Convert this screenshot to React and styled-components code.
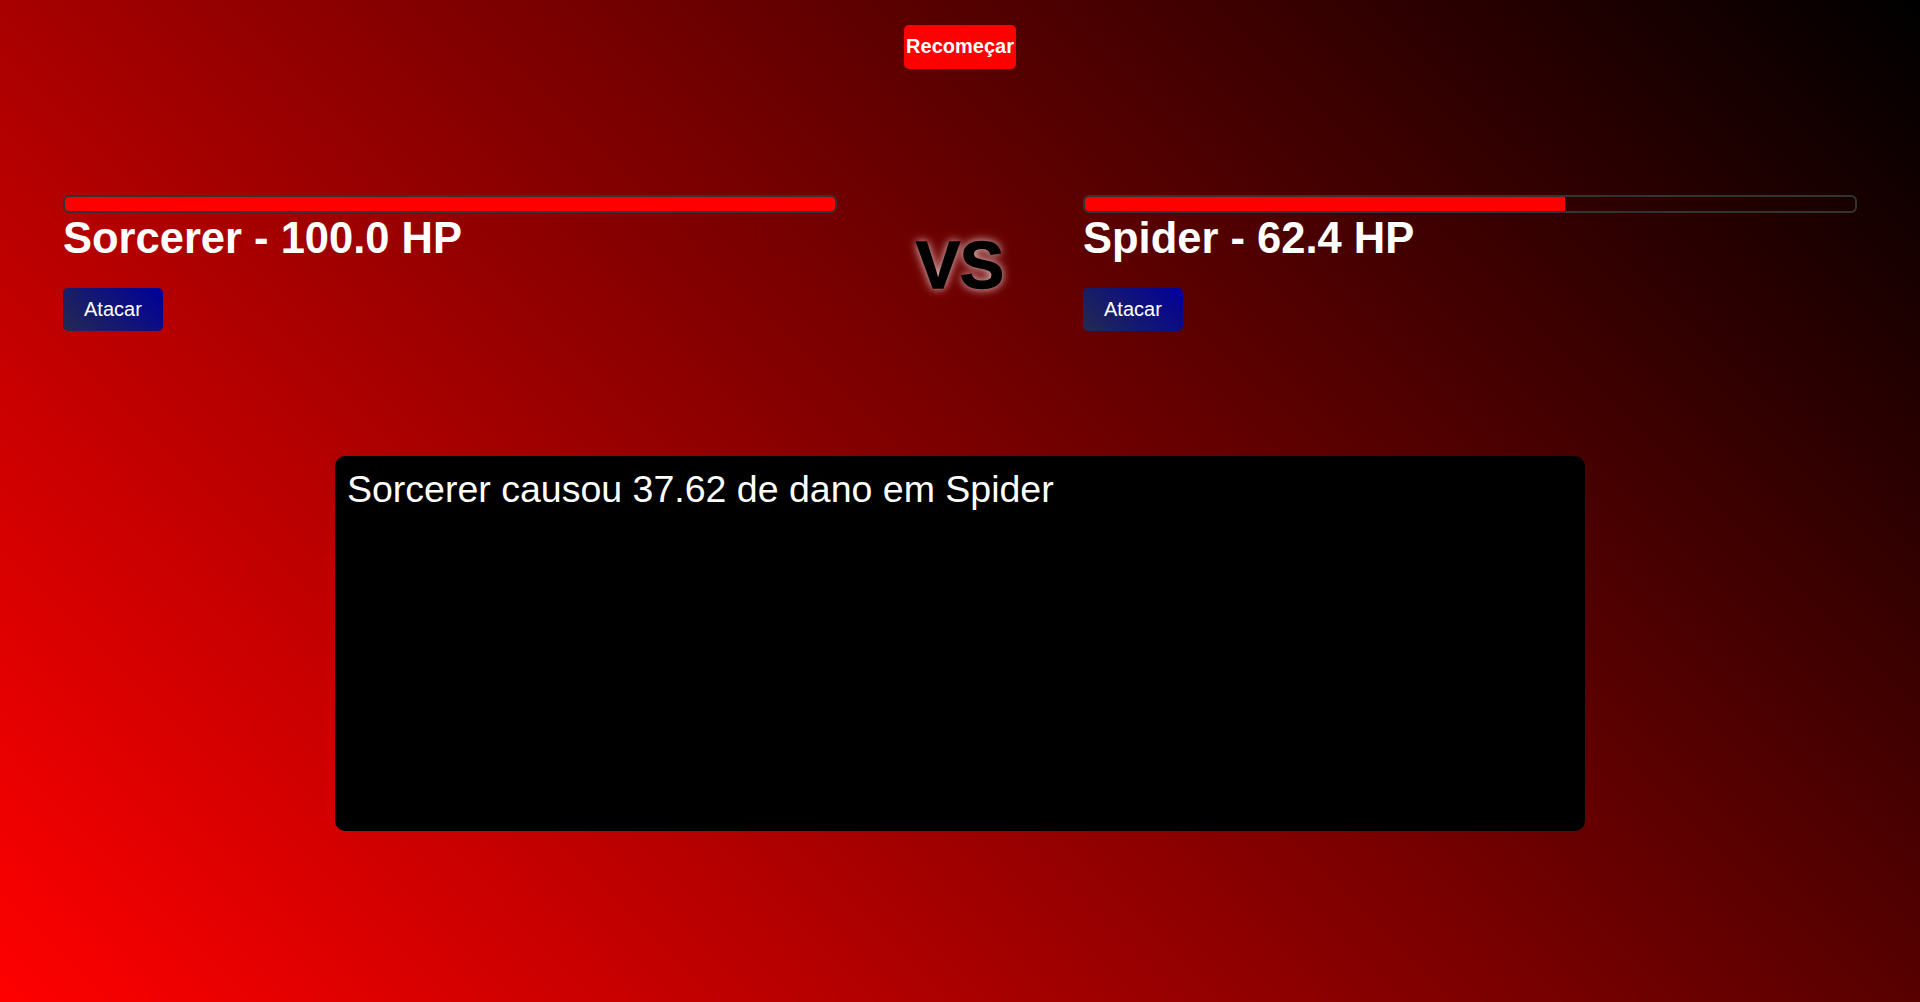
import React from 'react';
import styled, { createGlobalStyle } from 'styled-components';

const GlobalStyle = createGlobalStyle`
  html, body {
    margin: 0;
    padding: 0;
  }
  body {
    font-family: "Liberation Sans", Arial, sans-serif;
  }
  * {
    box-sizing: border-box;
  }
`;

const Page = styled.div`
  min-height: 100vh;
  background: linear-gradient(45deg, #ff0000, #000000);
  display: flex;
  flex-direction: column;
  align-items: center;
  padding-top: 25px;
`;

const RestartButton = styled.button`
  background: #ff0000;
  color: #fff;
  border: none;
  border-radius: 5px;
  font-family: inherit;
  font-size: 20px;
  font-weight: bold;
  padding: 9px 2px 11px;
  height: 44px;
  cursor: pointer;
`;

const Arena = styled.div`
  width: 100%;
  display: flex;
  justify-content: space-between;
  align-items: center;
  padding: 0 63px;
  margin-top: 126px;
`;

const Player = styled.div`
  width: 774px;
  display: flex;
  flex-direction: column;
  align-items: flex-start;
`;

const HealthBar = styled.div`
  width: 100%;
  height: 18px;
  border: 2px solid #333;
  border-radius: 6px;
  overflow: hidden;
`;

const HealthFill = styled.div`
  height: 100%;
  background: #ff0000;
  border-radius: 3px 0 0 3px;
`;

const Name = styled.h2`
  margin: 0 0 25px;
  color: #fff;
  font-size: 43.5px;
  line-height: 50px;
  font-weight: bold;
`;

const AttackButton = styled.button`
  background: linear-gradient(45deg, #232a50, #00009c);
  color: #fff;
  border: none;
  border-radius: 5px;
  font-family: inherit;
  font-size: 20px;
  padding: 10px 21px;
  height: 43px;
  cursor: pointer;
`;

const Versus = styled.div`
  font-size: 66px;
  font-weight: bold;
  color: #000;
  padding-top: 4px;
  -webkit-text-stroke: 1.5px #000;
  text-shadow: 0 0 8px rgba(255, 255, 255, 0.8), 0 0 14px rgba(255, 200, 200, 0.4);
`;

const Log = styled.div`
  margin-top: 125px;
  width: 1250px;
  height: 375px;
  background: #000;
  border-radius: 10px;
  padding: 12px;
  color: #fff;
  font-size: 37.5px;
`;

const fighters = [
  { name: 'Sorcerer', hp: 100.0 },
  { name: 'Spider', hp: 62.38 },
];

const Fighter = ({ name, hp }) => (
  <Player>
    <HealthBar>
      <HealthFill style={{ width: `${hp}%` }} />
    </HealthBar>
    <Name>
      {name} - {hp.toFixed(1)} HP
    </Name>
    <AttackButton>Atacar</AttackButton>
  </Player>
);

export default function App() {
  return (
    <>
      <GlobalStyle />
      <Page>
        <RestartButton>Recomeçar</RestartButton>
        <Arena>
          <Fighter {...fighters[0]} />
          <Versus>VS</Versus>
          <Fighter {...fighters[1]} />
        </Arena>
        <Log>Sorcerer causou 37.62 de dano em Spider</Log>
      </Page>
    </>
  );
}
